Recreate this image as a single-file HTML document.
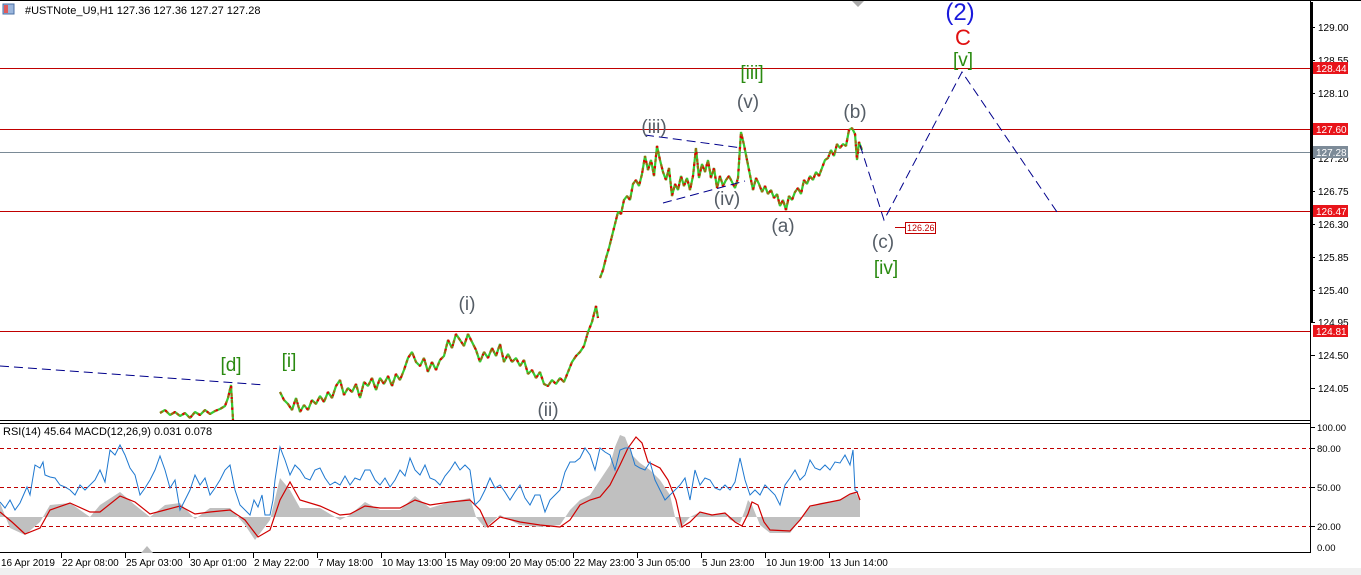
<!DOCTYPE html>
<html><head><meta charset="utf-8"><style>
html,body{margin:0;padding:0;background:#fff;}
svg{display:block;font-family:"Liberation Sans",Tahoma,sans-serif;}
</style></head><body>
<svg width="1361" height="575" viewBox="0 0 1361 575" xmlns="http://www.w3.org/2000/svg">
<rect width="1361" height="575" fill="#fff"/>
<rect x="0" y="0" width="1361" height="1" fill="#000"/>
<rect x="1310" y="0" width="1" height="553" fill="#000"/>
<rect x="1310" y="2" width="3" height="320" fill="#000"/>
<rect x="0" y="420" width="1311" height="1" fill="#000"/>
<rect x="0" y="423" width="1311" height="1" fill="#000"/>
<rect x="0" y="552" width="1311" height="1" fill="#000"/>
<rect x="0" y="568" width="1361" height="7" fill="#f0f0f0"/>
<rect x="3" y="4" width="11" height="10" fill="#9bb6dc" stroke="#4a6fa5"/>
<rect x="4" y="5" width="4" height="8" fill="#e05a5a"/>
<text x="25" y="14" font-size="11">#USTNote_U9,H1  127.36 127.36 127.27 127.28</text>
<text x="3" y="435" font-size="11">RSI(14) 45.64 MACD(12,26,9) 0.031 0.078</text>
<!-- levels -->
<rect x="0" y="68" width="1310" height="1" fill="#c00000"/>
<rect x="0" y="129" width="1310" height="1" fill="#c00000"/>
<rect x="0" y="152" width="1310" height="1" fill="#7a8a96"/>
<rect x="0" y="211" width="1310" height="1" fill="#c00000"/>
<rect x="0" y="331" width="1310" height="1" fill="#c00000"/>
<g stroke="#c00000" stroke-dasharray="4,3">
<line x1="0" y1="448.5" x2="1310" y2="448.5"/>
<line x1="0" y1="487.5" x2="1310" y2="487.5"/>
<line x1="0" y1="526.5" x2="1310" y2="526.5"/>
</g>
<!-- MACD -->
<polygon fill="#c0c0c0" points="0,517 0,503 10,528 25,535 40,522 50,505 70,503 90,517 100,505 120,492 135,505 150,517 165,505 180,503 195,519 210,508 230,508 245,525 255,540 270,520 280,478 290,490 300,508 320,508 340,520 350,515 365,502 380,510 400,510 415,496 430,508 450,502 470,498 476,517 485,528 500,515 520,525 540,527 560,525 570,510 580,500 590,495 600,480 610,465 615,447 620,435 625,437 632,455 640,463 650,470 660,480 670,495 675,517 680,528 690,517 700,512 715,515 725,513 730,520 740,523 745,510 748,500 752,505 760,525 770,533 790,533 800,520 810,507 820,503 840,500 855,492 860,500 860,517"/>
<polyline fill="none" stroke="#d00000" stroke-width="1.2" points="0,512 12,522 25,534 40,528 50,510 70,503 90,512 100,512 120,496 135,502 150,514 165,510 180,506 195,514 210,512 230,510 245,520 258,537 270,530 280,500 290,482 300,500 320,506 340,515 350,514 365,506 380,508 400,508 415,500 430,505 450,502 470,500 480,510 488,527 500,517 520,522 540,525 560,527 570,520 580,505 590,500 600,497 610,485 620,465 628,448 636,437 642,443 648,462 660,468 668,480 676,500 682,527 690,522 700,512 712,515 725,513 735,522 742,526 748,514 752,502 758,505 764,522 770,530 790,531 800,520 810,506 825,503 840,500 850,494 857,492 860,500"/>
<!-- RSI -->
<polyline fill="none" stroke="#1e78d0" stroke-width="1" points="0,502 5,508 10,500 15,510 20,503 27,487 30,495 35,465 40,468 43,462 45,475 50,477 55,478 60,485 65,487 70,490 75,495 80,485 85,490 95,480 100,470 105,482 110,450 115,455 120,445 125,455 130,468 135,475 140,495 145,488 150,480 155,470 160,456 165,470 170,488 175,480 180,510 185,500 190,490 195,475 200,485 205,478 210,495 215,488 220,480 225,470 230,465 235,490 240,505 245,510 250,515 254,500 258,507 262,495 265,515 270,515 273,500 275,480 278,460 280,447 283,455 285,460 290,475 295,465 300,470 305,478 310,480 315,470 320,468 325,478 330,485 335,482 340,485 345,476 350,485 355,478 360,480 365,470 370,470 375,480 380,485 385,478 390,487 395,480 400,470 405,476 410,458 415,470 420,475 425,465 430,478 435,480 440,485 445,476 450,470 455,462 460,470 465,465 470,470 475,505 480,500 485,490 490,478 495,488 500,485 505,492 510,500 515,492 520,485 525,498 530,505 535,495 540,495 545,512 550,500 555,495 560,490 565,472 570,462 575,462 580,458 585,448 590,455 595,470 600,448 605,452 610,455 615,470 620,450 625,448 630,448 635,465 640,468 645,470 650,462 655,480 660,490 665,500 670,495 675,490 680,485 685,478 690,500 695,470 700,485 705,478 710,480 715,488 720,490 725,485 730,490 735,482 740,458 745,480 750,495 755,490 760,495 765,485 770,490 775,495 780,505 785,485 790,478 795,470 800,480 805,475 810,460 815,468 820,470 825,465 830,470 835,462 840,463 845,455 850,465 853,450 855,490 858,492"/>
<!-- price -->
<g fill="none" stroke-width="2.2" stroke-linejoin="bevel">
<polyline stroke="#33cc33" points="160,413 165,410 170,415 175,412 180,416 185,413 190,418 195,412 200,415 205,410 210,414 215,411 220,409 225,406 228,398 231,385 233,420"/>
<polyline stroke="#33cc33" points="280,392 284,400 288,404 292,410 296,398 300,412 304,405 308,410 312,400 316,404 320,396 324,402 328,392 332,398 336,386 340,380 344,395 348,388 352,392 356,384 360,398 364,382 368,386 372,378 376,390 380,378 384,384 388,376 392,386 396,374 400,380 404,370 408,358 412,352 416,362 420,366 424,358 428,372 432,362 436,370 440,360 444,356 448,340 452,348 456,334 460,340 464,346 468,334 472,342 476,350 480,362 484,352 488,358 492,348 496,356 500,344 504,362 508,354 512,362 516,358 520,366 524,360 528,374 532,370 536,378 540,372 544,384 548,386 552,380 556,384 560,378 564,382 568,372 572,362 576,356 580,352 584,346 588,332 592,322 596,306 598,318"/>
<polyline stroke="#33cc33" points="600,278 603,270 606,258 609,248 612,236 615,224 618,212 621,214 624,200 627,196 630,200 633,184 636,180 639,186 642,174 645,156 648,170 651,160 654,176 657,146 660,160 663,172 666,180 669,168 672,196 675,184 678,190 681,176 684,186 687,178 690,190 693,176 696,148 699,178 702,164 705,172 708,160 711,178 714,168 717,188 720,176 723,186 726,180 729,176 732,182 735,188 738,178 741,132 744,145 747,160 750,175 753,190 756,178 759,184 762,192 765,186 768,194 771,190 774,198 777,194 780,206 783,200 786,210 789,196 792,200 795,192 798,188 801,194 804,180 807,184 810,176 813,180 816,172 819,176 822,168 825,160 828,158 831,150 834,156 837,144 840,148 843,144 846,146 849,130 852,128 855,134 857,160 859,142 862,150"/>
</g>
<g fill="none" stroke-width="2.2" stroke-linejoin="bevel" stroke="#9a6b10" stroke-dasharray="3,4">
<polyline points="160,413 165,410 170,415 175,412 180,416 185,413 190,418 195,412 200,415 205,410 210,414 215,411 220,409 225,406 228,398 231,385 233,420"/>
<polyline points="280,392 284,400 288,404 292,410 296,398 300,412 304,405 308,410 312,400 316,404 320,396 324,402 328,392 332,398 336,386 340,380 344,395 348,388 352,392 356,384 360,398 364,382 368,386 372,378 376,390 380,378 384,384 388,376 392,386 396,374 400,380 404,370 408,358 412,352 416,362 420,366 424,358 428,372 432,362 436,370 440,360 444,356 448,340 452,348 456,334 460,340 464,346 468,334 472,342 476,350 480,362 484,352 488,358 492,348 496,356 500,344 504,362 508,354 512,362 516,358 520,366 524,360 528,374 532,370 536,378 540,372 544,384 548,386 552,380 556,384 560,378 564,382 568,372 572,362 576,356 580,352 584,346 588,332 592,322 596,306 598,318"/>
<polyline points="600,278 603,270 606,258 609,248 612,236 615,224 618,212 621,214 624,200 627,196 630,200 633,184 636,180 639,186 642,174 645,156 648,170 651,160 654,176 657,146 660,160 663,172 666,180 669,168 672,196 675,184 678,190 681,176 684,186 687,178 690,190 693,176 696,148 699,178 702,164 705,172 708,160 711,178 714,168 717,188 720,176 723,186 726,180 729,176 732,182 735,188 738,178 741,132 744,145 747,160 750,175 753,190 756,178 759,184 762,192 765,186 768,194 771,190 774,198 777,194 780,206 783,200 786,210 789,196 792,200 795,192 798,188 801,194 804,180 807,184 810,176 813,180 816,172 819,176 822,168 825,160 828,158 831,150 834,156 837,144 840,148 843,144 846,146 849,130 852,128 855,134 857,160 859,142 862,150"/>
</g>
<g fill="none" stroke-width="2.2" stroke-linejoin="bevel" stroke="#e00000" stroke-dasharray="2,9" stroke-dashoffset="5">
<polyline points="160,413 165,410 170,415 175,412 180,416 185,413 190,418 195,412 200,415 205,410 210,414 215,411 220,409 225,406 228,398 231,385 233,420"/>
<polyline points="280,392 284,400 288,404 292,410 296,398 300,412 304,405 308,410 312,400 316,404 320,396 324,402 328,392 332,398 336,386 340,380 344,395 348,388 352,392 356,384 360,398 364,382 368,386 372,378 376,390 380,378 384,384 388,376 392,386 396,374 400,380 404,370 408,358 412,352 416,362 420,366 424,358 428,372 432,362 436,370 440,360 444,356 448,340 452,348 456,334 460,340 464,346 468,334 472,342 476,350 480,362 484,352 488,358 492,348 496,356 500,344 504,362 508,354 512,362 516,358 520,366 524,360 528,374 532,370 536,378 540,372 544,384 548,386 552,380 556,384 560,378 564,382 568,372 572,362 576,356 580,352 584,346 588,332 592,322 596,306 598,318"/>
<polyline points="600,278 603,270 606,258 609,248 612,236 615,224 618,212 621,214 624,200 627,196 630,200 633,184 636,180 639,186 642,174 645,156 648,170 651,160 654,176 657,146 660,160 663,172 666,180 669,168 672,196 675,184 678,190 681,176 684,186 687,178 690,190 693,176 696,148 699,178 702,164 705,172 708,160 711,178 714,168 717,188 720,176 723,186 726,180 729,176 732,182 735,188 738,178 741,132 744,145 747,160 750,175 753,190 756,178 759,184 762,192 765,186 768,194 771,190 774,198 777,194 780,206 783,200 786,210 789,196 792,200 795,192 798,188 801,194 804,180 807,184 810,176 813,180 816,172 819,176 822,168 825,160 828,158 831,150 834,156 837,144 840,148 843,144 846,146 849,130 852,128 855,134 857,160 859,142 862,150"/>
</g>
<rect x="0" y="421" width="1310" height="2" fill="#fff"/>
<!-- blue dashed -->
<g stroke="#00008b" stroke-dasharray="9,5" fill="none" stroke-width="1">
<line x1="0" y1="366" x2="265" y2="385"/>
<line x1="645" y1="135" x2="742" y2="148"/>
<line x1="663" y1="203" x2="745" y2="181"/>
<polyline points="860,145 884,220 962,72 1057,212"/>
</g>
<rect x="895" y="227" width="10" height="1" fill="#c00000"/>
<rect x="905.5" y="222.5" width="30" height="11" fill="#fff" stroke="#c00000"/>
<text x="907" y="231" font-size="9" fill="#c00000">126.26</text>
<g font-size="19" text-anchor="middle">
<text x="960" y="20" fill="#1a1adc" font-size="24">(2)</text>
<text x="963" y="45" fill="#e01010" font-size="22">C</text>
<text x="963" y="66" fill="#2a8a10">[v]</text>
<text x="752" y="79" fill="#2a8a10">[iii]</text>
<text x="748" y="108" fill="#555d66">(v)</text>
<text x="654" y="133" fill="#555d66">(iii)</text>
<text x="855" y="118" fill="#555d66">(b)</text>
<text x="727" y="205" fill="#555d66">(iv)</text>
<text x="783" y="232" fill="#555d66">(a)</text>
<text x="883" y="248" fill="#555d66">(c)</text>
<text x="886" y="274" fill="#2a8a10">[iv]</text>
<text x="467" y="310" fill="#555d66">(i)</text>
<text x="548" y="416" fill="#555d66">(ii)</text>
<text x="231" y="371" fill="#2a8a10">[d]</text>
<text x="289" y="367" fill="#2a8a10">[i]</text>
</g>
<polygon points="852,1 864,1 858,7" fill="#aaa"/>
<polygon points="141,553 153,553 147,546" fill="#bbb"/>
<g font-size="10" fill="#000">
<text x="1318" y="31">129.00</text><rect x="1311" y="27" width="4" height="1"/>
<text x="1318" y="64">128.55</text><rect x="1311" y="60" width="4" height="1"/>
<text x="1318" y="97">128.10</text><rect x="1311" y="93" width="4" height="1"/>
<text x="1318" y="162">127.20</text><rect x="1311" y="158" width="4" height="1"/>
<text x="1318" y="195">126.75</text><rect x="1311" y="191" width="4" height="1"/>
<text x="1318" y="228">126.30</text><rect x="1311" y="224" width="4" height="1"/>
<text x="1318" y="261">125.85</text><rect x="1311" y="257" width="4" height="1"/>
<text x="1318" y="294">125.40</text><rect x="1311" y="290" width="4" height="1"/>
<text x="1318" y="326">124.95</text><rect x="1311" y="322" width="4" height="1"/>
<text x="1318" y="359">124.50</text><rect x="1311" y="355" width="4" height="1"/>
<text x="1318" y="392">124.05</text><rect x="1311" y="388" width="4" height="1"/>
</g>
<g font-size="10">
<rect x="1313" y="62" width="35" height="12" fill="#e8141a"/><text x="1316" y="72" fill="#fff">128.44</text>
<rect x="1313" y="123" width="35" height="12" fill="#e8141a"/><text x="1316" y="133" fill="#fff">127.60</text>
<rect x="1313" y="146" width="35" height="12" fill="#7d8b98"/><text x="1316" y="156" fill="#fff">127.28</text>
<rect x="1313" y="205" width="35" height="12" fill="#e8141a"/><text x="1316" y="215" fill="#fff">126.47</text>
<rect x="1313" y="325" width="35" height="12" fill="#e8141a"/><text x="1316" y="335" fill="#fff">124.81</text>
</g>
<g font-size="9.5">
<text x="1317" y="431">100.00</text><rect x="1311" y="427" width="4" height="1"/>
<text x="1317" y="452">80.00</text><rect x="1311" y="448" width="4" height="1"/>
<text x="1317" y="491">50.00</text><rect x="1311" y="487" width="4" height="1"/>
<text x="1317" y="530">20.00</text><rect x="1311" y="526" width="4" height="1"/>
<text x="1317" y="551">0.00</text>
</g>
<g font-size="10" fill="#000">
<text x="1" y="566">16 Apr 2019</text>
<text x="62" y="566">22 Apr 08:00</text><rect x="61" y="553" width="1" height="5"/>
<text x="126" y="566">25 Apr 03:00</text><rect x="125" y="553" width="1" height="5"/>
<text x="190" y="566">30 Apr 01:00</text><rect x="189" y="553" width="1" height="5"/>
<text x="254" y="566">2 May 22:00</text><rect x="253" y="553" width="1" height="5"/>
<text x="318" y="566">7 May 18:00</text><rect x="317" y="553" width="1" height="5"/>
<text x="382" y="566">10 May 13:00</text><rect x="381" y="553" width="1" height="5"/>
<text x="446" y="566">15 May 09:00</text><rect x="445" y="553" width="1" height="5"/>
<text x="510" y="566">20 May 05:00</text><rect x="509" y="553" width="1" height="5"/>
<text x="574" y="566">22 May 23:00</text><rect x="573" y="553" width="1" height="5"/>
<text x="638" y="566">3 Jun 05:00</text><rect x="637" y="553" width="1" height="5"/>
<text x="702" y="566">5 Jun 23:00</text><rect x="701" y="553" width="1" height="5"/>
<text x="766" y="566">10 Jun 19:00</text><rect x="765" y="553" width="1" height="5"/>
<text x="830" y="566">13 Jun 14:00</text><rect x="829" y="553" width="1" height="5"/>
</g>
</svg>
</body></html>
